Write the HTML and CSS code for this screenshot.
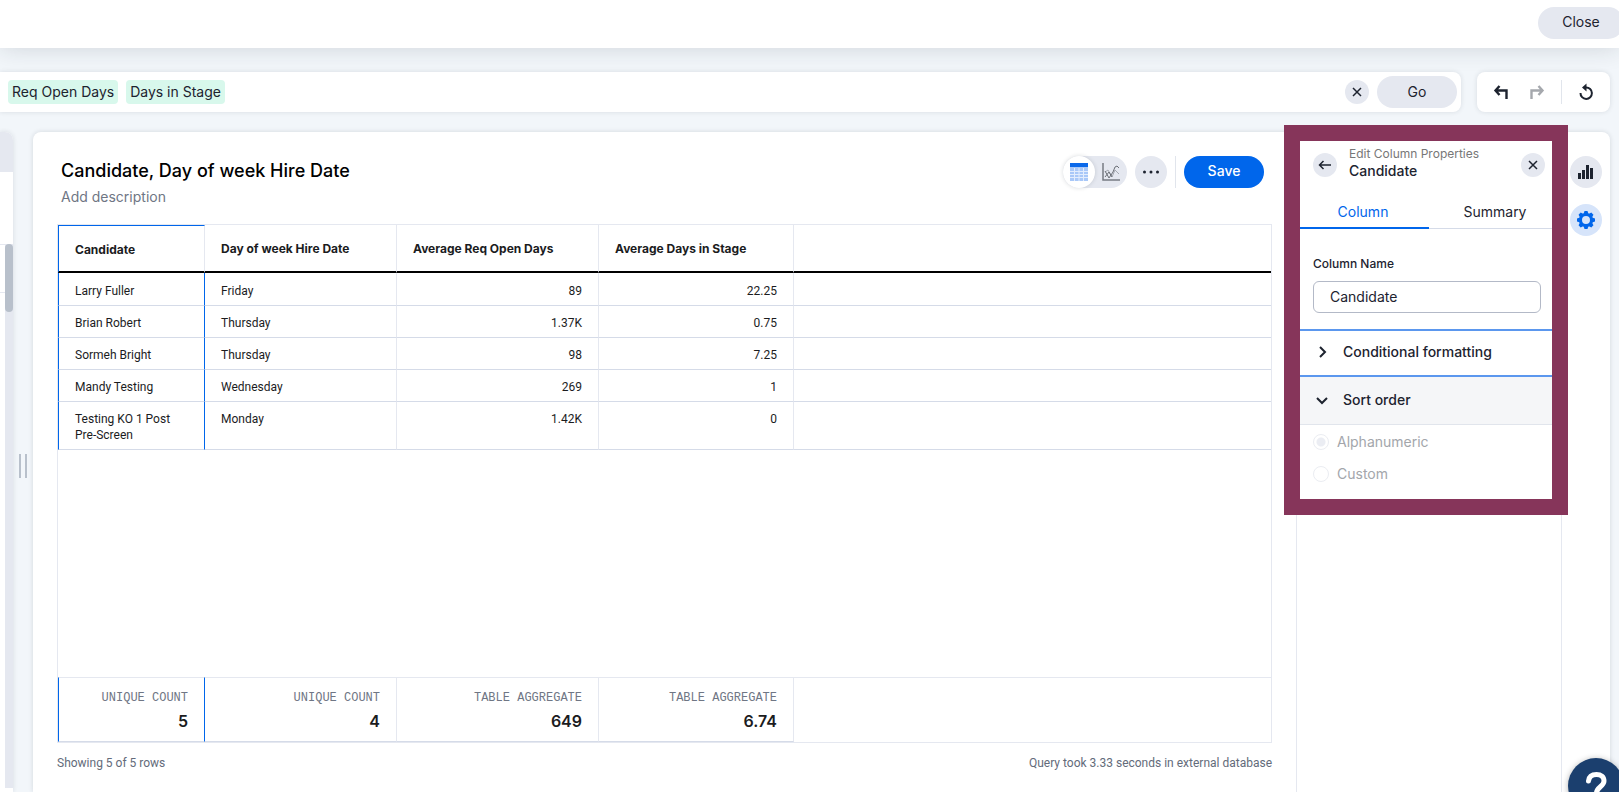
FILE: index.html
```html
<!DOCTYPE html>
<html lang="en">
<head>
    <meta charset="utf-8">
    <title>Candidate, Day of week Hire Date</title>
    <link rel="stylesheet" href="styles.css">
</head>
<body>
    <header class="topbar">
        <button class="pill close-btn">Close</button>
    </header>

    <div class="search-row">
        <div class="search-bar">
            <span class="token">Req Open Days</span>
            <span class="token">Days in Stage</span>
            <button class="icon-btn small clear-btn" aria-label="Clear search">
                <svg width="24" height="24" viewBox="0 0 24 24"><path d="M8 8l8 8M16 8l-8 8" class="line"/></svg>
            </button>
            <button class="pill go-btn">Go</button>
        </div>
        <div class="history">
            <button class="plain-btn" aria-label="Undo">
                <svg width="24" height="24" viewBox="0 0 24 24"><path d="M10.500 6L6.500 10.500L10.500 15M6.500 10.500H17.500V19" class="line heavy"/></svg>
            </button>
            <button class="plain-btn" aria-label="Redo" disabled>
                <svg width="24" height="24" viewBox="0 0 24 24"><path d="M13.500 6L17.500 10.500L13.500 15M17.500 10.500H6.500V19" class="line heavy"/></svg>
            </button>
            <span class="divider"></span>
            <button class="plain-btn reset-btn" aria-label="Reset">
                <svg width="24" height="24" viewBox="0 0 24 24"><path d="M6.500 13A5.700 5.700 0 1 0 12 7.500H10" class="line thick"/><path d="M12.500 3.500v8l-4.500-4z"/></svg>
            </button>
        </div>
    </div>

    <main class="workspace">
        <aside class="data-panel">
            <div class="data-head"></div>
            <div class="data-body">
                <div class="data-list">
                    <div class="data-item"></div>
                </div>
                <div class="scroll-track"><div class="scroll-thumb"></div></div>
            </div>
        </aside>
        <div class="splitter"><span></span></div>

        <section class="sheet">
            <div class="answer">
                <div class="answer-head">
                    <div class="titles">
                        <h1>Candidate, Day of week Hire Date</h1>
                        <p>Add description</p>
                    </div>
                    <div class="actions">
                        <div class="view-toggle">
                            <button class="view active" aria-label="Table view">
                                <svg width="18" height="18" viewBox="0 0 18 18">
                                    <rect width="18" height="18" fill="#a9c8f8"/>
                                    <path d="M0 8.500h18M0 11.500h18M0 14.500h18M4.500 5v13M9 5v13M13.500 5v13" stroke="#e3edfd" fill="none"/>
                                    <rect width="18" height="4" fill="#0a68ea"/>
                                </svg>
                            </button>
                            <button class="view" aria-label="Chart view">
                                <svg width="18" height="18" viewBox="0 0 18 18">
                                    <path d="M1 0v17h17" fill="none" stroke="#777b82" stroke-width="1.500"/>
                                    <path d="M3 9l3-2l4 7l3-7l4 4" fill="none" stroke="#a5a9b1"/>
                                    <path d="M3 8l4 7l4-6l2-5l2-1l2 2M3 14l4-5l3 5" fill="none" stroke="#6c7077"/>
                                </svg>
                            </button>
                        </div>
                        <button class="icon-btn" aria-label="More">
                            <svg width="24" height="24" viewBox="0 0 24 24"><circle cx="5.500" cy="12" r="1.500"/><circle cx="12" cy="12" r="1.500"/><circle cx="18.500" cy="12" r="1.500"/></svg>
                        </button>
                        <span class="divider tall"></span>
                        <button class="pill save-btn">Save</button>
                    </div>
                </div>

                <div class="table-wrap">
                    <table>
                        <colgroup><col class="c1"><col class="c2"><col class="c3"><col class="c4"><col></colgroup>
                        <thead>
                            <tr>
                                <th class="selected">Candidate</th>
                                <th>Day of week Hire Date</th>
                                <th>Average Req Open Days</th>
                                <th>Average Days in Stage</th>
                                <td></td>
                            </tr>
                        </thead>
                        <tbody>
                            <tr><td class="selected">Larry Fuller</td><td>Friday</td><td class="num">89</td><td class="num">22.25</td><td></td></tr>
                            <tr><td class="selected">Brian Robert</td><td>Thursday</td><td class="num">1.37K</td><td class="num">0.75</td><td></td></tr>
                            <tr><td class="selected">Sormeh Bright</td><td>Thursday</td><td class="num">98</td><td class="num">7.25</td><td></td></tr>
                            <tr><td class="selected">Mandy Testing</td><td>Wednesday</td><td class="num">269</td><td class="num">1</td><td></td></tr>
                            <tr><td class="selected">Testing KO 1 Post Pre-Screen</td><td>Monday</td><td class="num">1.42K</td><td class="num">0</td><td></td></tr>
                        </tbody>
                    </table>
                    <table class="totals">
                        <colgroup><col class="c1"><col class="c2"><col class="c3"><col class="c4"><col></colgroup>
                        <tbody>
                            <tr>
                                <td class="selected"><span>UNIQUE COUNT</span><b>5</b></td>
                                <td><span>UNIQUE COUNT</span><b>4</b></td>
                                <td><span>TABLE AGGREGATE</span><b>649</b></td>
                                <td><span>TABLE AGGREGATE</span><b>6.74</b></td>
                                <td></td>
                            </tr>
                        </tbody>
                    </table>
                </div>

                <div class="status">
                    <span>Showing 5 of 5 rows</span>
                    <span>Query took 3.33 seconds in external database</span>
                </div>
            </div>

            <aside class="props">
                <div class="props-head">
                    <button class="icon-btn small" aria-label="Back">
                        <svg width="24" height="24" viewBox="0 0 24 24"><path d="M18 12H7M10.500 8L6.500 12L10.500 16" class="line"/></svg>
                    </button>
                    <div class="props-title">
                        <small>Edit Column Properties</small>
                        <strong>Candidate</strong>
                    </div>
                    <button class="icon-btn small" aria-label="Close panel">
                        <svg width="24" height="24" viewBox="0 0 24 24"><path d="M8 8l8 8M16 8l-8 8" class="line"/></svg>
                    </button>
                </div>
                <div class="tabs">
                    <button class="tab active">Column</button>
                    <button class="tab">Summary</button>
                </div>
                <div class="field">
                    <label for="column-name">Column Name</label>
                    <input type="text" id="column-name" value="Candidate">
                </div>
                <button class="accordion focused">
                    <svg width="16" height="16" viewBox="0 0 16 16"><path d="M6 3l5 5l-5 5" class="line thick"/></svg>
                    Conditional formatting
                </button>
                <button class="accordion open">
                    <svg width="16" height="16" viewBox="0 0 16 16"><path d="M3 6l5 5l5-5" class="line thick"/></svg>
                    Sort order
                </button>
                <div class="sort-options">
                    <label><input type="radio" name="sort" checked disabled>Alphanumeric</label>
                    <label><input type="radio" name="sort" disabled>Custom</label>
                </div>
                <div class="highlight"></div>
            </aside>

            <nav class="rail">
                <button class="icon-btn" aria-label="Charts">
                    <svg width="24" height="24" viewBox="0 0 24 24"><path d="M4 13h3v6H4zM8 10h3v9H8zM12 5h3v14h-3zM16 8h3v11h-3z"/></svg>
                </button>
                <button class="icon-btn on" aria-label="Settings">
                    <svg width="24" height="24" viewBox="-12 -12 24 24">
                        <circle r="5.500" fill="none" stroke="currentColor" stroke-width="3"/>
                        <path id="tooth" d="M-2.500 -6L-1.500 -9H1.500L2.500 -6z"/>
                        <use href="#tooth" transform="rotate(45)"/><use href="#tooth" transform="rotate(90)"/>
                        <use href="#tooth" transform="rotate(135)"/><use href="#tooth" transform="rotate(180)"/>
                        <use href="#tooth" transform="rotate(225)"/><use href="#tooth" transform="rotate(270)"/>
                        <use href="#tooth" transform="rotate(315)"/>
                    </svg>
                </button>
            </nav>
        </section>
    </main>

    <button class="help" aria-label="Help">
        <svg width="56" height="56" viewBox="0 0 56 56"><path d="M20.500 23C21 18.500 24 16.500 28.500 16.500C33 16.500 36 19 36 23C36 28.500 28.500 29 28.500 35" fill="none" stroke="#fff" stroke-width="5" stroke-linecap="round"/><circle cx="28.500" cy="42" r="3" fill="#fff"/></svg>
    </button>
</body>
</html>
```
FILE: styles.css
```css
* {
    box-sizing: border-box;
}
body {
    margin: 0;
    height: 100vh;
    display: flex;
    flex-direction: column;
    overflow: hidden;
    background: #f2f6fa;
    color: #1d232f;
    font-family: Inter, "Liberation Sans", sans-serif;
    font-size: 14px;
    line-height: 20px;
}
button {
    font: inherit;
    color: inherit;
    border: none;
    padding: 0;
    cursor: pointer;
    background: none;
}
svg {
    display: block;
    fill: currentColor;
}
.line {
    fill: none;
    stroke: currentColor;
    stroke-width: 1.5;
}
.thick {
    stroke-width: 2;
}
.heavy {
    stroke-width: 2.4;
}

/* Buttons */
.pill {
    height: 32px;
    border-radius: 16px;
    background: #e5e8f0;
}
.icon-btn {
    width: 32px;
    height: 32px;
    flex: none;
    display: flex;
    align-items: center;
    justify-content: center;
    border-radius: 50%;
    background: #e5e8f0;
}
.icon-btn.small {
    width: 24px;
    height: 24px;
}
.icon-btn.on {
    background: #d6e4fa;
    color: #0066eb;
}
.divider {
    width: 1px;
    height: 24px;
    background: #e1e5ec;
}
.divider.tall {
    height: 32px;
}

/* Header */
.topbar {
    flex: none;
    height: 48px;
    padding-top: 7px;
    display: flex;
    justify-content: flex-end;
    align-items: flex-start;
    background: #fff;
    box-shadow: 0 0 24px rgba(25, 35, 49, 0.16);
}
.close-btn {
    width: 86px;
    margin-right: -5px;
    padding-bottom: 2px;
}

/* Search */
.search-row {
    flex: none;
    display: flex;
    gap: 16px;
    margin: 24px 9px 20px 0;
}
.search-bar, .history {
    height: 40px;
    display: flex;
    align-items: center;
    background: #fff;
    box-shadow: 0 0 5px rgba(25, 35, 49, 0.12);
}
.search-bar {
    flex: 1;
    gap: 8px;
    padding: 0 4px 0 8px;
    border-radius: 0 8px 8px 0;
}
.token {
    height: 24px;
    line-height: 24px;
    padding: 0 4px;
    border-radius: 4px;
    background: #d8f8ec;
}
.clear-btn {
    margin-left: auto;
}
.go-btn {
    width: 80px;
    padding-bottom: 1px;
}
.history {
    width: 133px;
    padding: 0 12px;
    justify-content: space-between;
    border-radius: 8px;
}
.plain-btn:disabled {
    color: #a5a8ad;
}

/* Workspace */
.workspace {
    flex: 1;
    min-height: 0;
    display: flex;
    padding-right: 9px;
}
.data-panel {
    width: 13px;
    display: flex;
    flex-direction: column;
    background: #fff;
    border-radius: 0 8px 0 0;
    box-shadow: 0 0 5px rgba(25, 35, 49, 0.12);
}
.data-head {
    height: 40px;
    border-radius: 0 8px 0 0;
    background: #e5e8f0;
}
.data-body {
    flex: 1;
    display: flex;
    padding: 72px 0 4px;
}
.data-list {
    flex: 1;
}
.data-item {
    height: 49px;
    border: 1px solid #e5e8f0;
    border-width: 1px 0;
}
.scroll-track {
    width: 8px;
    background: #e5e8f0;
}
.scroll-thumb {
    height: 68px;
    border-radius: 4px;
    background: #b8c0cb;
}
.splitter {
    width: 20px;
    display: flex;
    align-items: center;
    justify-content: center;
}
.splitter span {
    width: 8px;
    height: 24px;
    margin-top: 8px;
    border: 2px solid #b8c0cb;
    border-width: 0 2px;
}
.sheet {
    flex: 1;
    min-width: 0;
    display: flex;
    background: #fff;
    border-radius: 8px 8px 0 0;
    box-shadow: 0 0 5px rgba(25, 35, 49, 0.14);
}
.answer {
    flex: 1;
    min-width: 0;
    display: flex;
    flex-direction: column;
    padding: 24px 24px 21px;
}
.answer-head {
    display: flex;
    justify-content: space-between;
    height: 68px;
    padding: 0 8px 0 4px;
}
h1 {
    margin: 3px 0 4px;
    font-size: 18px;
    line-height: 24px;
    font-weight: 500;
    color: #000;
}
.titles p {
    margin: 0;
    color: #6f7684;
}
.actions {
    display: flex;
    gap: 8px;
    height: 32px;
}
.view-toggle {
    display: flex;
    width: 64px;
    border-radius: 16px;
    background: #e5e8f0;
}
.view {
    width: 32px;
    height: 32px;
    display: flex;
    align-items: center;
    justify-content: center;
    border-radius: 50%;
}
.view.active {
    background: #fff;
    box-shadow: 0 0 4px rgba(25, 35, 49, 0.16);
}
.save-btn {
    width: 80px;
    padding-bottom: 2px;
    background: #0066eb;
    color: #fff;
    font-weight: 500;
}

/* Table */
.table-wrap {
    flex: 1;
    display: flex;
    flex-direction: column;
    justify-content: space-between;
    border: 1px solid #e5e8f0;
}
table {
    width: 100%;
    table-layout: fixed;
    border-collapse: separate;
    border-spacing: 0;
    font-size: 12px;
    line-height: 16px;
    color: #1b1c1e;
}
.c1 { width: 147px; }
.c2 { width: 192px; }
.c3 { width: 202px; }
.c4 { width: 195px; }
th, td {
    padding: 9px 16px 6px;
    text-align: left;
    vertical-align: top;
    border-right: 1px solid #e5e8f0;
    border-bottom: 1px solid #d5dbe8;
}
tbody td {
    font-family: Roboto, "Liberation Sans", sans-serif;
}
th:last-child, td:last-child {
    border-right: none;
}
thead th, thead td {
    height: 48px;
    padding: 2px 16px 0;
    vertical-align: middle;
    font-weight: 700;
    border-bottom: 2px solid #000;
}
thead .selected {
    border-top: 1px solid #0066eb;
}
tbody tr:first-child td {
    padding-top: 10px;
}
.selected {
    border-left: 1px solid #0066eb;
}
td.selected {
    border-right-color: #0066eb;
}
.num {
    text-align: right;
}
.totals td {
    height: 65px;
    border-top: 1px solid #e5e8f0;
    text-align: right;
}
.totals td:last-child {
    border-bottom: none;
}
.totals span, .totals b {
    display: block;
}
.totals span {
    margin: 2px 0 7px;
    font-family: "Liberation Mono", monospace;
    color: #6f7684;
}
.totals b {
    font-family: Inter, "Liberation Sans", sans-serif;
    font-size: 16px;
    font-weight: 600;
}
.status {
    display: flex;
    justify-content: space-between;
    margin-top: 12px;
    font-family: Roboto, "Liberation Sans", sans-serif;
    font-size: 12px;
    line-height: 16px;
    color: #636b7a;
}

/* Column properties */
.props {
    position: relative;
    width: 266px;
    border: 1px solid #e5e8f0;
    border-width: 0 1px;
}
.props-head {
    display: flex;
    align-items: center;
    height: 66px;
    padding: 0 16px;
}
.props-title {
    flex: 1;
    padding: 0 12px 6px;
}
.props-title small, .props-title strong {
    display: block;
    line-height: 17px;
}
.props-title small {
    font-size: 12px;
    color: #777;
}
.props-title strong {
    font-weight: 500;
}
.tabs {
    display: flex;
    border-bottom: 1px solid #d5dbe8;
}
.tab {
    flex: 1;
    height: 31px;
    padding-bottom: 2px;
    border-bottom: 2px solid transparent;
    margin-bottom: -1px;
}
.tab.active {
    color: #0066eb;
    border-color: #0066eb;
}
.field {
    padding: 25px 20px 16px 16px;
}
.field label {
    display: block;
    margin-bottom: 7px;
    font-size: 12px;
    font-weight: 500;
}
.field input {
    width: 100%;
    height: 32px;
    padding: 0 16px 2px;
    border: 1px solid #b3b9c7;
    border-radius: 6px;
    font: inherit;
    color: inherit;
}
.accordion {
    width: 100%;
    height: 48px;
    display: flex;
    align-items: center;
    gap: 13px;
    padding: 0 0 2px 17px;
    font-weight: 500;
}
.accordion.focused {
    border: 2px solid #5b97ee;
    border-width: 2px 0;
}
.accordion.open {
    background: #f5f6f8;
    border-bottom: 1px solid #e1e5ec;
}
.sort-options {
    display: flex;
    flex-direction: column;
    gap: 12px;
    padding: 7px 16px;
    color: #a3a6ab;
}
.sort-options label {
    display: flex;
    align-items: center;
    gap: 8px;
}
.sort-options input {
    appearance: none;
    width: 16px;
    height: 16px;
    margin: 0;
    border: 1px solid #ebedf2;
    border-radius: 50%;
}
.sort-options input:checked {
    background: radial-gradient(circle, #ebedf3 4px, #fff 5px);
}
/* frame drawn over the panel to point it out */
.highlight {
    position: absolute;
    top: -7px;
    left: -13px;
    right: -7px;
    height: 390px;
    border: 16px solid #86355a;
    pointer-events: none;
}
.rail {
    width: 48px;
    display: flex;
    flex-direction: column;
    align-items: center;
    gap: 16px;
    padding-top: 24px;
}

.help {
    position: fixed;
    right: -5px;
    bottom: -22px;
    width: 56px;
    height: 56px;
    border-radius: 50%;
    background: #1b3f6e;
    box-shadow: 0 1px 6px rgba(0, 0, 0, 0.3);
}
```
